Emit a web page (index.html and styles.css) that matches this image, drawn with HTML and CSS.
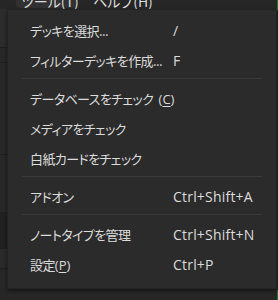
FILE: index.html
```html
<!DOCTYPE html>
<html lang="ja">
<head>
<meta charset="utf-8">
<link rel="stylesheet" href="styles.css">
</head>
<body>
<div class="app">
  <div class="menubar">
    <span class="mb-item active">ツール(<u>T</u>)</span>
    <span class="mb-item">ヘルプ(<u>H</u>)</span>
  </div>
  <div class="content">
    <div class="band b1"></div>
    <div class="band b2"></div>
    <div class="band b3"></div>
    <div class="band b4"></div>
    <div class="band b5"></div>
    <div class="band b6"></div>
    <div class="band b7"></div>
  </div>
  <div class="edge"></div>
</div>
<div class="menu">
  <div class="item"><span class="label">デッキを選択...</span><span class="sc">/</span></div>
  <div class="item"><span class="label">フィルターデッキを作成...</span><span class="sc">F</span></div>
  <div class="sep"></div>
  <div class="item"><span class="label">データベースをチェック <span class="lat gap">(<u>C</u>)</span></span><span class="sc"></span></div>
  <div class="item"><span class="label">メディアをチェック</span><span class="sc"></span></div>
  <div class="item"><span class="label">白紙カードをチェック</span><span class="sc"></span></div>
  <div class="sep"></div>
  <div class="item"><span class="label">アドオン</span><span class="sc">Ctrl+Shift+A</span></div>
  <div class="sep"></div>
  <div class="item"><span class="label">ノートタイプを管理</span><span class="sc">Ctrl+Shift+N</span></div>
  <div class="item"><span class="label">設定<span class="lat">(<u>P</u>)</span></span><span class="sc">Ctrl+P</span></div>
</div>
</body>
</html>
```
FILE: styles.css
```css
html, body {
  margin: 0;
  padding: 0;
  width: 278px;
  height: 300px;
  overflow: hidden;
  background: #252525;
  font-family: "Noto Sans CJK JP", "Noto Sans", sans-serif;
  font-feature-settings: "palt";
  color: #dcdcdc;
}
.app {
  position: relative;
  width: 278px;
  height: 300px;
  display: flex;
  flex-direction: column;
}
.menubar {
  height: 9px;
  overflow: hidden;
  display: flex;
  align-items: flex-end;
  background: #262626;
  font-size: 14px;
  line-height: 14px;
  white-space: nowrap;
}
.mb-item {
  display: block;
  height: 14px;
  margin-bottom: 1px;
  border-radius: 4px;
}
.mb-item.active {
  margin-left: 16px;
  padding-left: 5px;
  width: 56px;
  background: #313131;
}
.mb-item + .mb-item {
  margin-left: 16px;
}
.content {
  flex: 1;
  display: flex;
  flex-direction: column;
}
.band { border-bottom: 1px solid #1f1f1f; }
.b1 { height: 38px; background: #2c2c2c; }
.b2 { height: 14px; background: #272727; }
.b3 { height: 91px; background: #282828; }
.b4 { height: 57px; background: #282828; }
.b5 { height: 35px; background: #212121; }
.b6 { height: 19px; background: #2a2a2a; }
.b7 { flex: 1; background: #272727; border: 0; }
.edge {
  position: absolute;
  right: 0;
  top: 0;
  width: 1px;
  height: 300px;
  background: linear-gradient(#1f7a2a 0 10px, #262626 10px 290px, #1f7a2a 290px);
}
.menu {
  position: absolute;
  left: 7px;
  top: 9px;
  width: 268px;
  padding: 5px 0 9px;
  background: #2b2b2b;
  border: 1px solid #232323;
  box-shadow: 0 2px 4px rgba(0,0,0,0.45);
  font-size: 13px;
}
.item {
  height: 30px;
  display: grid;
  grid-template-columns: 143px auto;
  align-items: center;
  padding-left: 22px;
  white-space: nowrap;
}
.label { letter-spacing: -0.6px; }
.lat { font-family: "Open Sans", "Noto Sans", sans-serif; font-size: 13px; letter-spacing: 0; }
.gap { margin-left: 3px; }
.sc { font-family: "Open Sans", "Noto Sans", sans-serif; font-size: 14px; letter-spacing: 0.2px; }
.sep {
  height: 1px;
  margin: 3px 14px 4px 14px;
  background: #3a3a3a;
}
u { text-decoration-thickness: 1px; text-underline-offset: 2px; }
```
